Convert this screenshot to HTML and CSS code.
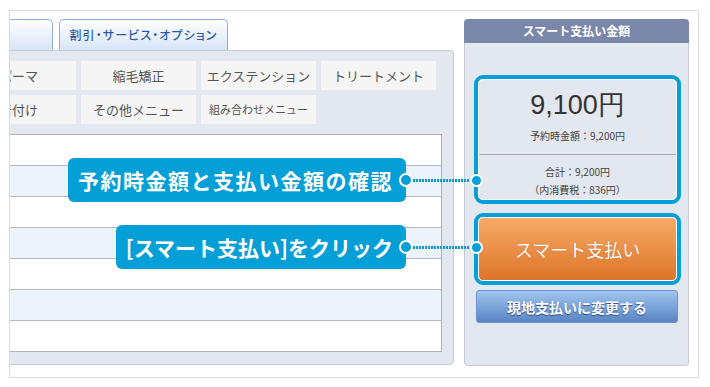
FILE: index.html
```html
<!DOCTYPE html>
<html lang="ja">
<head>
  <meta charset="UTF-8">
  <title>スマート支払い</title>
  <link rel="stylesheet" href="styles.css">
</head>
<body>
  <div class="frame">
    <!-- menu list (cut off on the left) -->
    <div class="menu-area">
      <div class="menu-inner">
        <div class="tabs">
          <div class="tab tab-first"></div>
          <div class="tab">割引・サービス・オプション</div>
        </div>
        <div class="menu-panel">
          <div class="menu-grid">
            <div class="menu-btn">パーマ</div>
            <div class="menu-btn">縮毛矯正</div>
            <div class="menu-btn">エクステンション</div>
            <div class="menu-btn">トリートメント</div>
            <div class="menu-btn">着付け</div>
            <div class="menu-btn">その他メニュー</div>
            <div class="menu-btn small">組み合わせメニュー</div>
          </div>
          <div class="rows">
            <div class="row"></div>
            <div class="row alt"></div>
            <div class="row"></div>
            <div class="row alt"></div>
            <div class="row"></div>
            <div class="row alt"></div>
            <div class="row"></div>
          </div>
        </div>
      </div>
    </div>

    <!-- payment panel -->
    <div class="pay-panel">
      <div class="pay-head">スマート支払い金額</div>
      <div class="pay-body">
        <div class="hl-box">
          <div class="amount-inner">
            <div class="price">9,100円</div>
            <div class="note">予約時金額：9,200円</div>
            <div class="total">合計：9,200円<br>（内消費税：836円）</div>
          </div>
        </div>
        <div class="hl-box pay-box">
          <button class="smart-btn">スマート支払い</button>
        </div>
        <button class="local-btn">現地支払いに変更する</button>
      </div>
    </div>

    <!-- callouts -->
    <div class="callout callout-confirm">
      <div class="callout-label">予約時金額と支払い金額の確認</div>
      <div class="callout-line"></div>
      <div class="callout-dot"></div>
    </div>
    <div class="callout callout-click">
      <div class="callout-label">[スマート支払い]をクリック</div>
      <div class="callout-line"></div>
      <div class="callout-dot"></div>
    </div>
  </div>
</body>
</html>
```

FILE: styles.css
```css
body {
  margin: 0;
  background: #fff;
  font-family: "Noto Sans CJK JP", "Noto Sans", sans-serif;
}

.frame {
  position: relative;
  box-sizing: border-box;
  width: 690px;
  height: 368px;
  margin: 10px 0 0 9px;
  padding-top: 8px;
  border: 1px solid #dcdcdc;
  display: flex;
  gap: 10px;
}

/* left side */
.menu-area {
  flex: none;
  width: 444px;
  overflow: hidden;
}

.menu-inner {
  width: 504px;
  margin-left: -60px;
}

.tabs {
  display: flex;
  gap: 6px;
  height: 31px;
}

.tab {
  box-sizing: border-box;
  width: 169px;
  height: 31px;
  border: 1px solid #8fb2dd;
  border-bottom: 0;
  border-radius: 5px 5px 0 0;
  background: linear-gradient(#ffffff, #d8e5f6);
  color: #2a5ca6;
  font-size: 12px;
  font-weight: 500;
  line-height: 30px;
  text-align: center;
  font-feature-settings: "palt";
  letter-spacing: 1.1px;
}

.tab-first {
  width: 103px;
}

.menu-panel {
  background: #e3e7ef;
  border: 1px solid #c3cbd8;
  border-radius: 0 4px 4px 0;
  padding: 10px 11px 12px 10px;
}

.menu-grid {
  display: grid;
  grid-template-columns: repeat(4, 115px);
  gap: 5px;
}

.menu-btn {
  height: 29px;
  background: #f5f5f5;
  color: #555;
  font-size: 13px;
  line-height: 29px;
  text-align: center;
  white-space: nowrap;
}

.menu-btn.small {
  font-size: 11px;
}

.rows {
  margin-top: 10px;
  background: #fff;
  border: 1px solid #b2b2b2;
}

.row {
  height: 30px;
  border-top: 1px solid #b8b8b8;
}

.row:first-child {
  border-top: 0;
}

.row.alt {
  background: #edf3fb;
}

/* right side */
.pay-panel {
  flex: none;
  width: 225px;
  height: 347px;
  display: flex;
  flex-direction: column;
}

.pay-head {
  height: 24px;
  background: #7b87a8;
  border-radius: 4px 4px 0 0;
  color: #fff;
  font-size: 12px;
  font-weight: bold;
  line-height: 24px;
  text-align: center;
}

.pay-body {
  flex: 1;
  background: #e3e7ef;
  border: 1px solid #c6cbd7;
  border-top: 0;
  border-radius: 0 0 4px 4px;
  padding-top: 32px;
}

.hl-box {
  margin: 0 7px 0 9px;
  border: 4px solid #049fd6;
  border-radius: 9px;
}

.amount-inner {
  border: 1px solid #fff;
  border-radius: 5px;
  text-align: center;
  color: #444;
}

.price {
  padding-top: 10px;
  font-family: "Liberation Sans", sans-serif;
  font-size: 27px;
  line-height: 30px;
  color: #333;
}

.note {
  margin-top: 9px;
  font-size: 10px;
  line-height: 14px;
}

.total {
  margin-top: 11px;
  padding-top: 8px;
  border-top: 1px solid #aaa;
  font-size: 10px;
  line-height: 18px;
}

.pay-box {
  margin-top: 9px;
}

.smart-btn {
  display: block;
  width: 100%;
  height: 64px;
  border: 1px solid #fff;
  border-radius: 5px;
  background: linear-gradient(#f7aa68, #dd7529);
  color: #fff;
  font-family: inherit;
  font-size: 18px;
  text-shadow: 0 0 1px #b05a1c;
}

.local-btn {
  display: block;
  width: 202px;
  height: 33px;
  margin: 5px 0 0 11px;
  border: 1px solid #6a92cc;
  border-radius: 3px;
  background: linear-gradient(#a0c5ef, #5985c4);
  color: #fff;
  font-family: inherit;
  font-size: 14px;
  font-weight: bold;
  text-shadow: 0 1px 1px #2f4c80;
}

/* callouts over the page */
.callout {
  position: absolute;
  right: 215px;
  display: flex;
  align-items: center;
}

.callout-confirm {
  top: 147px;
}

.callout-click {
  top: 214px;
}

.callout-label {
  position: relative;
  height: 44px;
  padding: 0 13px 0 10px;
  border-radius: 6px;
  background: #049fd6;
  color: #fff;
  font-size: 21px;
  font-weight: bold;
  letter-spacing: 1.5px;
  line-height: 44px;
  white-space: nowrap;
}

.callout-click .callout-label {
  letter-spacing: 0;
}

.callout-label::after {
  content: "";
  position: absolute;
  right: -7px;
  top: 15px;
  width: 10px;
  height: 10px;
  border: 2px solid #fff;
  border-radius: 50%;
  background: #049fd6;
}

.callout-line {
  width: 57px;
  height: 3px;
  margin-left: 7px;
  background: repeating-linear-gradient(90deg, #0a9ad4 0 2px, transparent 2px 3px);
}

.callout-dot {
  box-sizing: border-box;
  width: 13px;
  height: 13px;
  border: 2px solid #fff;
  border-radius: 50%;
  background: #049fd6;
}
```
